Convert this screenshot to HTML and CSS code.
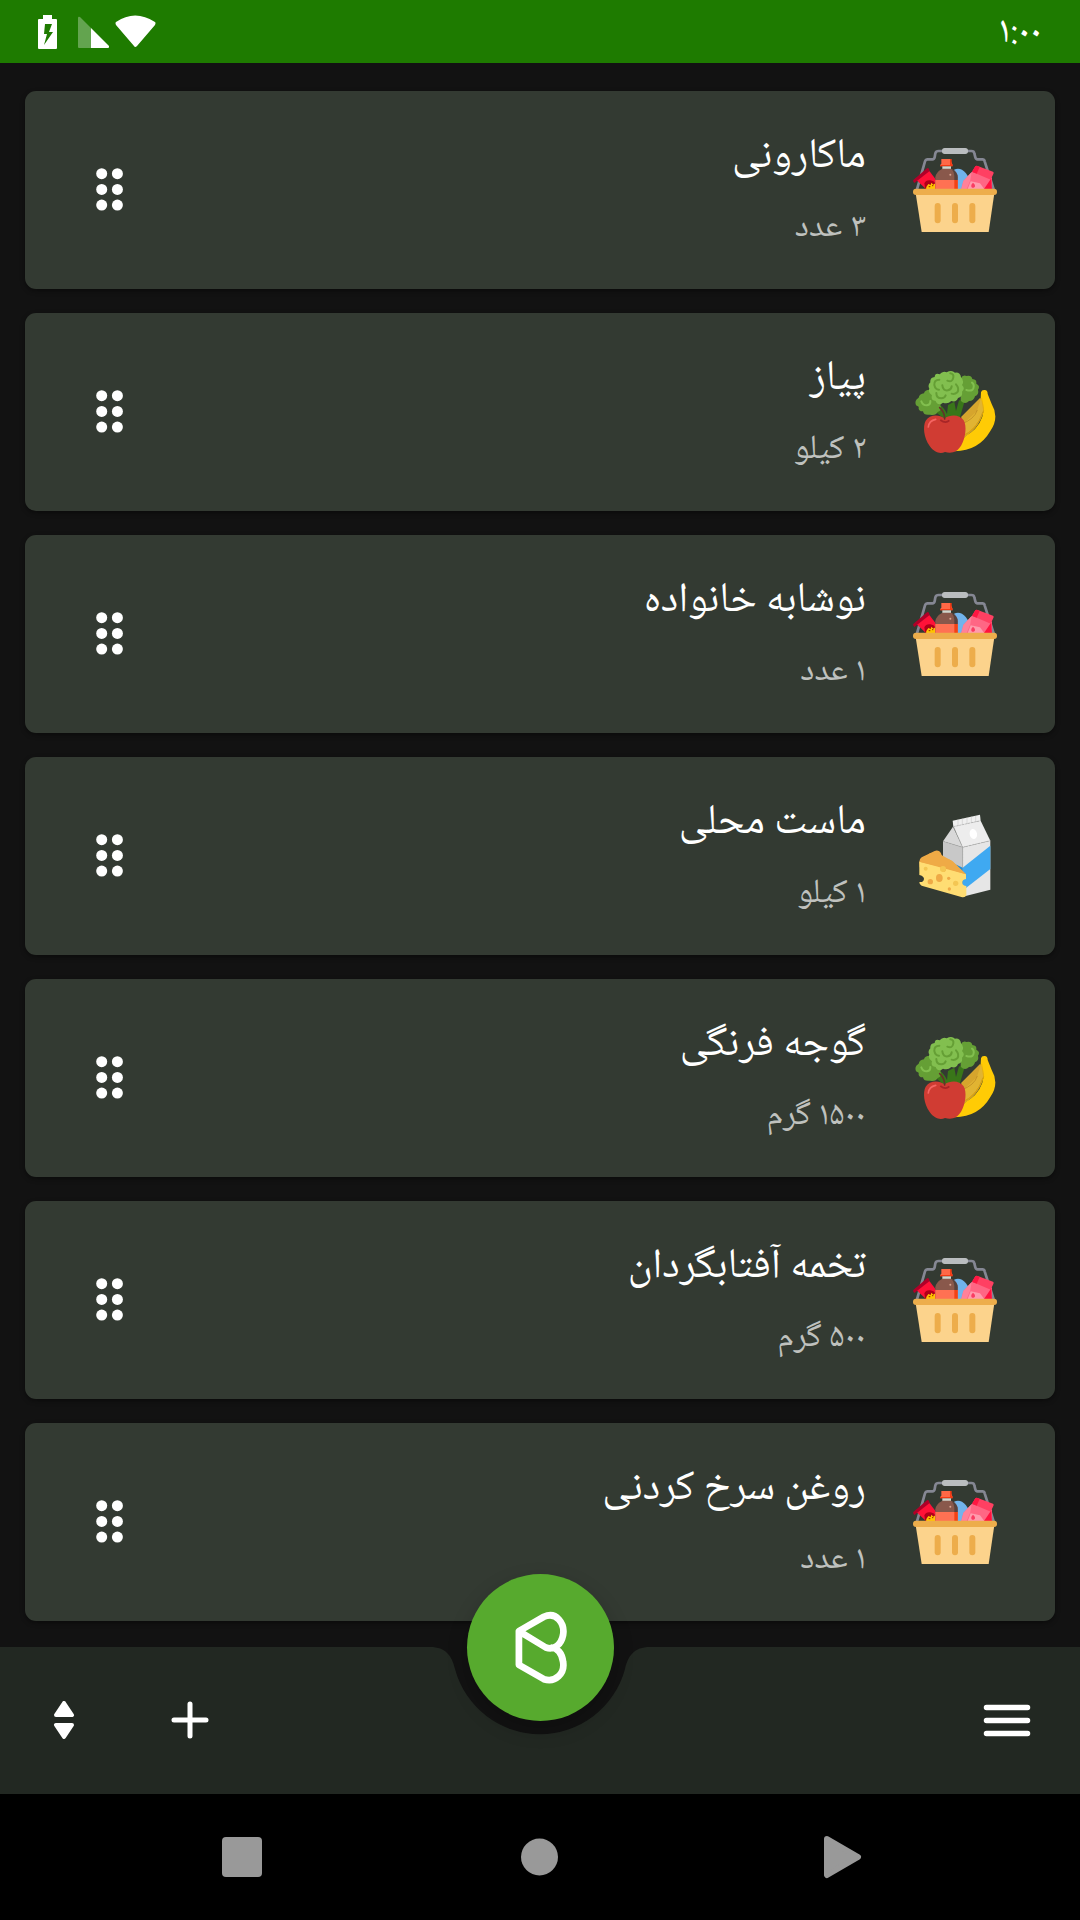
FILE: index.html
```html
<!DOCTYPE html>
<html lang="fa" dir="rtl">
<head>
<meta charset="utf-8">
<meta name="viewport" content="width=device-width, initial-scale=1">
<title>فهرست خرید</title>
<link rel="stylesheet" href="styles.css">
</head>
<body>
<svg class="sprite" aria-hidden="true">
  <symbol id="grip" viewBox="0 0 28 44">
    <g fill="#fff"><circle cx="5.7" cy="5.7" r="5.5"/><circle cx="21.4" cy="5.7" r="5.5"/><circle cx="5.7" cy="21.4" r="5.5"/><circle cx="21.4" cy="21.4" r="5.5"/><circle cx="5.7" cy="37.1" r="5.5"/><circle cx="21.4" cy="37.1" r="5.5"/></g>
  </symbol>
  <symbol id="basket" viewBox="69 54 252 252">
    <path d="M81 178 L105 94 Q107 88 113 88 H127 Q133 88 134 82 L136 70 Q138 63 146 63 H244 Q252 63 253 70 L256 82 Q257 88 263 88 H277 Q283 88 284 94 L311 178" fill="none" stroke="#858793" stroke-width="8"/>
    <rect x="156" y="54" width="78" height="18" rx="8" fill="#babdbf"/>
    <path d="M192 119 Q204 113 216 119 Q228 126 237 145 V180 H192Z" fill="#71b3ec"/>
    <path d="M76 147 L114 118 L141 153 V180 H111Z" fill="#ff1238"/>
    <path d="M70 150 Q68 153 73 159 L119 123 Q117 112 111 115Z" fill="#b00028"/>
    <path d="M103 160 Q108 149 121 151 Q132 152 137 161 V180 H106Z" fill="#b00019"/>
    <path d="M109 171 L115 162 L122 165 L124 158 L130 164 L136 160 V180 H108Z" fill="#ffc400"/>
    <path d="M116 170h5M126 167h4" stroke="#9b2600" stroke-width="3"/>
    <path d="M154 87 H180 L182 91 L187 103 V109 H151 V104 L154 101Z" fill="#ff6846"/>
    <path d="M180 87 H185 V103 H188 V109 H151 V105 H180Z" fill="#f33a14"/>
    <path d="M157 109h26v9h-26z" fill="#d0d6cd"/>
    <path d="M157 116 H184 Q203 124 203 142 V180 H136 V142 Q138 125 157 116Z" fill="#89584b"/>
    <path d="M184 116 Q203 124 203 142 V150 H193 V137 Q192 124 184 116Z" fill="#57423d"/>
    <path d="M136 150h67v30h-67z" fill="#ff7153"/>
    <path d="M193 150h10v30h-10z" fill="#f34215"/>
    <circle cx="181" cy="134" r="3" fill="#d8a594"/>
    <path d="M213 180 L220 153 L246 125 L306 143 V180Z" fill="#ff6684"/>
    <path d="M246 125 L256 109 Q260 106 265 109 L309 125 Q313 127 310 132 L304 145 Q303 150 297 147Z" fill="#ff4062"/>
    <path d="M246 125 L256 109 Q260 106 265 109 L269 111 L260 131Z" fill="#ff1742"/>
    <path d="M220 153 L245 126 L241 151 L229 180 H213Z" fill="#ff8199"/>
    <path d="M304 145 L306 180 H280Z" fill="#ff123e"/>
    <path d="M242 154 L270 160 L285 180 H232Z" fill="#ff9bad"/>
    <path d="M249 158 C240 166 244 175 251 173 C258 170 255 163 249 158" fill="#fa3c62"/>
    <path d="M77 190H313L296 306H95Z" fill="#fcd38c"/>
    <rect x="69" y="176" width="252" height="19" rx="9" fill="#edad4b"/>
    <g fill="#edad4b"><rect x="134" y="219" width="18" height="61" rx="9"/><rect x="186" y="219" width="18" height="61" rx="9"/><rect x="238" y="219" width="18" height="61" rx="9"/></g>
  </symbol>
  <symbol id="produce" viewBox="69 60 252 252">
    <path d="M130 180 L150 166 Q163 174 171 192 L174 165 L193 155 L198 183 L207 151 L224 153 L209 205 H160Z" fill="#397619"/>
    <path d="M214 200 L270 144 Q285 150 281 182 Q267 241 211 268Z" fill="#d6a52d"/>
    <path d="M217 224 L261 183 L273 143 Q281 153 281 179 Q266 235 214 261Z" fill="#e1b432"/>
    <path d="M214 222 Q253 208 262 180 M212 261 Q263 239 279 185" fill="none" stroke="#b78321" stroke-width="2"/>
    <path d="M273 127 Q275 119 284 120 Q293 120 293 132 L305 162 Q329 202 301 243 Q267 302 194 304 L207 282 Q225 256 240 250 Q276 222 281 182 Q281 160 272 145Z" fill="#ffcb05"/>
    <path d="M275 144 L281 182 Q266 236 207 265" fill="none" stroke="#e8ae00" stroke-width="2"/>
    <path d="M78 166 Q72 151 86 143 Q89 131 102 130 Q104 119 119 119 Q134 114 147 138 Q160 155 151 166 Q158 182 143 186 Q137 198 120 194 Q101 197 99 184 Q84 184 86 170Z" fill="#659f35"/>
    <path d="M212 86 Q218 73 230 78 Q244 75 247 87 Q261 88 259 101 Q272 107 264 119 Q268 133 255 139 Q252 153 237 153 Q225 165 212 152Z" fill="#659f35"/>
    <path d="M118 116 Q112 105 121 97 Q119 83 134 81 Q135 68 149 73 Q158 62 170 67 Q185 59 195 68 Q211 66 213 82 Q224 93 216 105 Q227 115 216 125 Q219 140 204 144 Q199 158 184 153 Q173 164 159 158 Q144 170 137 153 Q121 151 126 136 Q113 128 118 116Z" fill="#82bf4f"/>
    <g fill="none" stroke="#659f35" stroke-width="6" stroke-linecap="round"><path d="M148 89 Q132 89 133 105 Q136 119 147 119"/><path d="M172 92 Q187 99 190 82 Q192 72 181 70"/><path d="M157 106 Q159 124 174 121 Q184 119 185 109"/><path d="M198 103 Q209 115 202 127 Q194 134 185 131"/><path d="M139 129 Q139 145 154 145 Q164 144 167 136"/></g>
    <path d="M94 154 Q99 167 111 166 Q122 164 121 153 M229 120 Q246 125 250 115 Q254 104 246 98" fill="none" stroke="#82bf4f" stroke-width="6" stroke-linecap="round"/>
    <path d="M164 205 C145 191 118 194 107 212 C98 229 101 262 119 288 C134 309 151 312 165 306 C184 312 202 307 214 286 C227 263 231 228 221 211 C209 193 181 193 164 205Z" fill="#d03c33"/>
    <path d="M151 210 Q167 222 178 211" fill="none" stroke="#a82527" stroke-width="5"/>
    <path d="M149 173 Q164 186 164 207" fill="none" stroke="#633229" stroke-width="5" stroke-linecap="round"/>
    <path d="M115 231 Q117 212 137 208" fill="none" stroke="#f56562" stroke-width="5" stroke-linecap="round"/>
  </symbol>
  <symbol id="dairy" viewBox="69 42 252 252">
    <path d="M188 62L270 44L272 62L190 80Z" fill="#f0f0f0"/>
    <path d="M204 59V75M217 56V73M231 53V69M244 50V66M257 48V64" stroke="#ccc" stroke-width="2"/>
    <path d="M190 79L272 62L301 122L218 142Z" fill="#ededed"/>
    <path d="M189 80L218 142L159 124Z" fill="#d8d8d8"/>
    <path d="M159 124L218 142V288L159 260Z" fill="#c8c8c8"/>
    <path d="M218 142L301 122V269L218 290Z" fill="#e6e6e6"/>
    <path d="M218 203L301 137V207L228 264L218 258Z" fill="#3fa9f1"/>
    <path d="M190 190L218 203V257L190 240Z" fill="#248bd5"/>
    <path d="M159 124L218 142L301 122M218 142V202M190 79L218 142M190 80L272 62" fill="none" stroke="#aaa" stroke-width="2" stroke-dasharray="7 2"/>
    <ellipse cx="250" cy="102" rx="11" ry="15" transform="rotate(-12 250 102)" fill="#fff"/>
    <path d="M88 185Q87 178 95 172L134 153Q141 149 148 154Q154 158 155 166Q160 176 171 177Q178 178 183 181L228 223L226 237L89 202Z" fill="#efaa46"/>
    <path d="M88 185L228 223V237Q216 239 217 249Q218 257 229 258V286Q225 294 214 291L95 257Q88 255 88 246Q101 248 102 236Q101 228 88 225Z" fill="#ffdd73"/>
    <path d="M88 185L152 200Q151 215 162 216Q168 215 169 205L228 223L188 184L150 163L120 160Z" fill="#efaa46"/>
    <g fill="#efaa46"><ellipse cx="148" cy="234" rx="10" ry="12"/><circle cx="121" cy="245" r="8"/><circle cx="176" cy="235" r="5"/><circle cx="178" cy="267" r="5"/></g>
    <g fill="#f4c653"><circle cx="107" cy="206" r="6"/><circle cx="159" cy="207" r="9"/><circle cx="197" cy="250" r="8"/></g>
  </symbol>
</svg>

<header class="status">
  <time class="clock" datetime="01:00"><bdo dir="ltr">۱:۰۰</bdo></time>
  <svg class="status-icons" width="118" height="34" viewBox="38 14 118 34" role="img" aria-label="باتری، آنتن و وای‌فای">
    <path d="M43 14h9v4h4q1 0 1 1v28q0 1-1 1H39q-1 0-1-1V19q0-1 1-1h4zM45 23L44 33H47L44 44L53 31H49L52 23Z" fill="#fff" fill-rule="evenodd"/>
    <path d="M78 17q0-2 2-1L91 27V47H79q-1 0-1-1z" fill="#fff" fill-opacity=".31"/>
    <path d="M91 27L109 45V46q0 1-1 1H91Z" fill="#fff"/>
    <path d="M116 21Q135 8 155 21Q156 22 155 24L137 45Q135 47 134 45L116 24Q115 22 116 21Z" fill="#fff"/>
  </svg>
</header>

<main>
  <ul class="items">
    <li class="item"><svg class="picture" aria-hidden="true"><use href="#basket"/></svg><div class="details"><h2 class="name">ماکارونی</h2><p class="amount">۳ عدد</p></div><button class="handle" aria-label="جابه‌جایی"><svg width="28" height="44"><use href="#grip"/></svg></button></li>
    <li class="item"><svg class="picture" aria-hidden="true"><use href="#produce"/></svg><div class="details"><h2 class="name">پیاز</h2><p class="amount">۲ کیلو</p></div><button class="handle" aria-label="جابه‌جایی"><svg width="28" height="44"><use href="#grip"/></svg></button></li>
    <li class="item"><svg class="picture" aria-hidden="true"><use href="#basket"/></svg><div class="details"><h2 class="name">نوشابه خانواده</h2><p class="amount">۱ عدد</p></div><button class="handle" aria-label="جابه‌جایی"><svg width="28" height="44"><use href="#grip"/></svg></button></li>
    <li class="item"><svg class="picture" aria-hidden="true"><use href="#dairy"/></svg><div class="details"><h2 class="name">ماست محلی</h2><p class="amount">۱ کیلو</p></div><button class="handle" aria-label="جابه‌جایی"><svg width="28" height="44"><use href="#grip"/></svg></button></li>
    <li class="item"><svg class="picture" aria-hidden="true"><use href="#produce"/></svg><div class="details"><h2 class="name">گوجه فرنگی</h2><p class="amount">۱۵۰۰ گرم</p></div><button class="handle" aria-label="جابه‌جایی"><svg width="28" height="44"><use href="#grip"/></svg></button></li>
    <li class="item"><svg class="picture" aria-hidden="true"><use href="#basket"/></svg><div class="details"><h2 class="name">تخمه آفتابگردان</h2><p class="amount">۵۰۰ گرم</p></div><button class="handle" aria-label="جابه‌جایی"><svg width="28" height="44"><use href="#grip"/></svg></button></li>
    <li class="item"><svg class="picture" aria-hidden="true"><use href="#basket"/></svg><div class="details"><h2 class="name">روغن سرخ کردنی</h2><p class="amount">۱ عدد</p></div><button class="handle" aria-label="جابه‌جایی"><svg width="28" height="44"><use href="#grip"/></svg></button></li>
  </ul>
</main>

<div class="toolbar">
  <div class="side">
    <button class="tool" aria-label="منو"><svg width="48" height="34" viewBox="0 0 48 34"><path d="M3.5 3.5H44.500M3.5 16.5H44.500M3.5 29.5H44.500" stroke="#fff" stroke-width="5.5" stroke-linecap="round"/></svg></button>
  </div>
  <div class="middle">
    <svg width="260" height="147" viewBox="0 0 260 147" aria-hidden="true"><path d="M0 0H20C36 0 42 9 45 22A88 88 0 0 0 215 22C218 9 224 0 240 0H260V147H0Z" fill="#222822"/></svg>
    <button class="fab" aria-label="سبد خرید"><svg width="54" height="73" viewBox="0 0 56 76"><path d="M5 21L31 6C44 0 53 13 51 25C49 35 42 41 33 38L5 21V56L31 71C43 75 53 65 51 53C50 44 45 38 38 38" fill="none" stroke="#fff" stroke-width="7" stroke-linejoin="round"/></svg></button>
  </div>
  <div class="side side-end">
    <button class="tool" aria-label="افزودن"><svg width="40" height="40" viewBox="0 0 40 40"><path d="M20 3V35M4 19H36" stroke="#fff" stroke-width="5" stroke-linecap="round"/></svg></button>
    <button class="tool" aria-label="مرتب‌سازی"><svg width="24" height="40" viewBox="0 0 24 40"><path d="M12 2L20 14H4ZM4 24H20L12 36Z" fill="#fff" stroke="#fff" stroke-width="4" stroke-linejoin="round"/></svg></button>
  </div>
</div>

<nav class="system">
  <button class="key" aria-label="بازگشت"><svg width="48" height="48" viewBox="0 0 48 48"><path d="M13 6L44 24L13 42Z" fill="#999" stroke="#999" stroke-width="6" stroke-linejoin="round"/></svg></button>
  <button class="key" aria-label="خانه"><svg width="48" height="48" viewBox="0 0 48 48"><circle cx="23.5" cy="24" r="18.5" fill="#999"/></svg></button>
  <button class="key" aria-label="برنامه‌های اخیر"><svg width="48" height="48" viewBox="0 0 48 48"><rect x="4" y="4" width="40" height="40" rx="4" fill="#999"/></svg></button>
</nav>
</body>
</html>
```
FILE: styles.css
```css
* {
  box-sizing: border-box;
}

body {
  margin: 0;
  min-height: 100vh;
  display: flex;
  flex-direction: column;
  background: #121212;
  color: #fff;
  font-family: "Noto Naskh Arabic UI", "Noto Naskh Arabic", "Noto Sans Arabic", "Noto Sans", "DejaVu Sans", sans-serif;
}

button {
  border: 0;
  padding: 0;
  background: none;
  cursor: pointer;
  display: flex;
  align-items: center;
  justify-content: center;
}

svg {
  display: block;
  flex: none;
}

.sprite {
  position: absolute;
  width: 0;
  height: 0;
}

.status {
  height: 63px;
  padding: 0 38px;
  display: flex;
  align-items: center;
  justify-content: space-between;
  background: #1e7b00;
}

.clock {
  font-size: 38px;
  line-height: 40px;
}

main {
  flex: 1;
  padding: 28px 25px 26px;
}

.items {
  list-style: none;
  margin: 0;
  padding: 0;
  display: flex;
  flex-direction: column;
  gap: 24px;
}

.item {
  height: 198px;
  padding: 0 58px;
  display: flex;
  align-items: center;
  gap: 47px;
  border-radius: 11px;
  background: #333a32;
  box-shadow: 0 2px 5px rgba(0, 0, 0, 0.4);
}

.picture {
  width: 84px;
  height: 84px;
}

.details {
  flex: 1;
  padding-top: 4px;
}

.name,
.amount {
  margin: 0;
  font-weight: 400;
}

.name {
  font-size: 42px;
  line-height: 72px;
}

.amount {
  font-size: 34px;
  line-height: 70px;
  color: #bfc1be;
}

.handle {
  width: 53px;
  height: 84px;
}

.toolbar {
  display: grid;
  grid-template-columns: 1fr 260px 1fr;
  height: 147px;
}

.side {
  display: flex;
  align-items: center;
  padding: 0 45px;
  background: #222822;
}

.side-end {
  padding: 0 36px;
  justify-content: flex-end;
  gap: 70px;
}

.tool {
  min-width: 56px;
  height: 64px;
}

.middle {
  position: relative;
}

.fab {
  position: absolute;
  top: -73px;
  left: 57px;
  width: 147px;
  height: 147px;
  border-radius: 50%;
  background: #57aa2e;
  box-shadow: 0 8px 20px rgba(0, 0, 0, 0.22);
}

.system {
  height: 126px;
  display: flex;
  align-items: center;
  justify-content: center;
  gap: 172px;
  background: #000;
}

.key {
  width: 126px;
  height: 126px;
}
```
